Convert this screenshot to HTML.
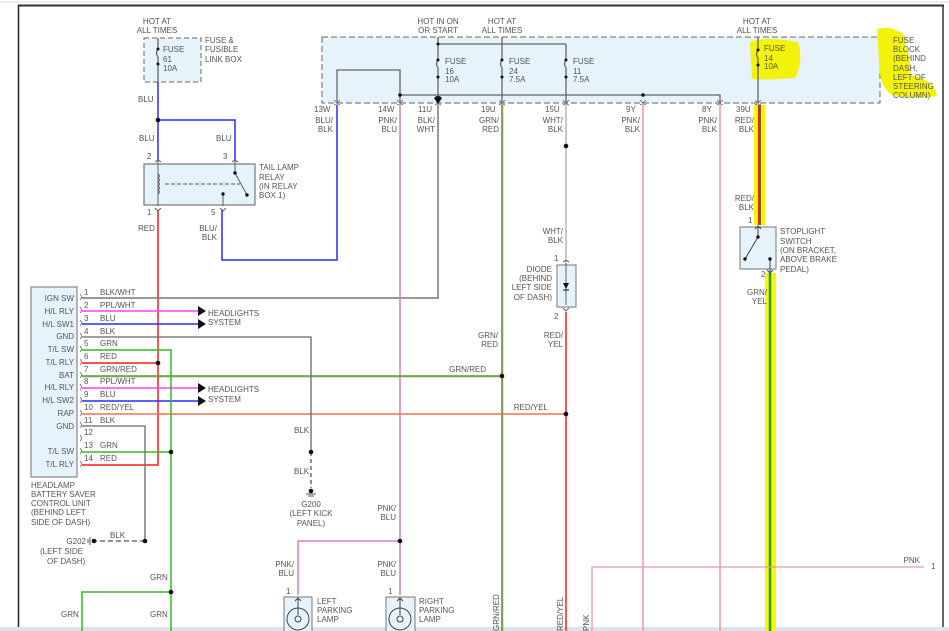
<!DOCTYPE html>
<html><head><meta charset="utf-8"><style>
html,body{margin:0;padding:0;background:#fff;width:949px;height:631px;overflow:hidden}
svg text{font-family:"Liberation Sans",sans-serif;font-size:8px;fill:#555}
</style></head><body>
<svg width="949" height="631" viewBox="0 0 949 631" xmlns="http://www.w3.org/2000/svg">
<rect width="949" height="631" fill="#fff"/>
<line x1="0" y1="2" x2="949" y2="2" stroke="#ddd" stroke-width="1"/>
<line x1="18" y1="5.5" x2="944" y2="5.5" stroke="#333" stroke-width="2"/>
<line x1="18.5" y1="5" x2="18.5" y2="631" stroke="#222" stroke-width="1.5"/>
<line x1="943" y1="5" x2="943" y2="631" stroke="#333" stroke-width="1.5"/>
<rect x="0" y="627" width="949" height="4" fill="#dde3e8"/>

<!-- fuse box 1 -->
<rect x="144" y="38" width="57" height="44" fill="#e6f3fb" stroke="#666" stroke-dasharray="5,3"/>
<!-- fuse block 2 -->
<rect x="322" y="37" width="558" height="66" fill="#e6f3fb" stroke="#666" stroke-dasharray="6,3"/>

<!-- highlights -->
<path d="M750 42 Q765 36 798 42 Q804 62 795 78 Q770 80 752 79 Z" fill="#f2f20a"/>
<path d="M877 29 Q890 26 895 30 Q910 35 905 45 Q912 60 910 75 Q935 80 937 96 Q910 99 892 95 Q878 85 879 60 Z" fill="#f2f20a"/>

<g fill="none" stroke-linecap="butt">
<path d="M158 38 V49 q-3 4 0 8 V82" stroke="#666" stroke-width="1.3"/>
<path d="M438 37 V60 q-3 4 0 8 V100" stroke="#666" stroke-width="1.3"/>
<path d="M438 44 H566" stroke="#666" stroke-width="1.3"/>
<path d="M502 37 V60 q-3 4 0 8 V102" stroke="#666" stroke-width="1.3"/>
<path d="M566 44 V60 q-3 4 0 8 V102" stroke="#666" stroke-width="1.3"/>
<path d="M758 37 V50 q-3 4 0 8 V102" stroke="#666" stroke-width="1.3"/>
<path d="M337 102 V70 H400 V102 M400 95 H720 V102" stroke="#666" stroke-width="1.3"/>

<path d="M158 82 V160 M158 120 H235 V160" stroke="#2a2aff" stroke-width="1.5"/>
<path d="M222 210 V260 H337 V105" stroke="#2a2aff" stroke-width="1.5"/>
<path d="M158 210 V465 H82 M158 363 H82" stroke="#ff1a1a" stroke-width="1.5"/>
<path d="M438 105 V298 H82" stroke="#777" stroke-width="1.5"/>
<path d="M400 105 V595 M400 541 H298 V595" stroke="#f07aa8" stroke-width="1.5"/>
<path d="M400 105 V595 M400 541 H298 V595" stroke="#9a8aff" stroke-width="0.5"/>
<path d="M502 105 V631 M82 376 H502" stroke="#3aa83a" stroke-width="1.6"/>
<path d="M503 105 V631 M82 377 H502" stroke="#f06040" stroke-width="0.5"/>
<path d="M566 105 V263" stroke="#aaa" stroke-width="1.3"/>
<path d="M566 312 V631" stroke="#ff1a1a" stroke-width="1.5"/>
<path d="M82 414 H566" stroke="#f5704e" stroke-width="1.6"/>
<path d="M643 105 V631 M720 105 V631" stroke="#f495a8" stroke-width="1.5"/>
<rect x="754" y="105" width="11" height="120" fill="#f8f800" stroke="none"/>
<path d="M759 105 V225" stroke="#ff1a1a" stroke-width="2"/>
<path d="M760.5 105 V225" stroke="#444" stroke-width="0.8"/>
<rect x="765" y="273" width="11" height="358" fill="#f8f800" stroke="none"/>
<path d="M770 273 V631" stroke="#2a9a2a" stroke-width="2.5"/>
<path d="M924 567 H592 V631" stroke="#f495a8" stroke-width="1.3"/>
<path d="M82 311 H200 M82 388 H200" stroke="#ff40ff" stroke-width="1.5"/>
<path d="M82 324 H200 M82 401 H200" stroke="#2a2aff" stroke-width="1.5"/>
<path d="M82 337 H311 V452" stroke="#666" stroke-width="1.3"/>
<path d="M311 452 V488" stroke="#555" stroke-width="1.3" stroke-dasharray="4,3"/>
<path d="M82 350 H171 V631 M82 452 H171 M171 592 H82 V631" stroke="#33bb22" stroke-width="1.5"/>
<path d="M82 426 H145 V541" stroke="#666" stroke-width="1.3"/>
<path d="M145 541 H94" stroke="#555" stroke-width="1.3" stroke-dasharray="5,3"/>
</g>

<g fill="#111">
<polygon points="198,306 206,311 198,316"/><polygon points="198,319 206,324 198,329"/>
<polygon points="198,383 206,388 198,393"/><polygon points="198,396 206,401 198,406"/>
<circle cx="158" cy="120" r="2.3"/><circle cx="158" cy="363" r="2.3"/><circle cx="171" cy="452" r="2.3"/>
<circle cx="171" cy="592" r="2.3"/><circle cx="145" cy="541" r="2.3"/><circle cx="311" cy="452" r="2.3"/>
<circle cx="311" cy="491" r="2.3"/><circle cx="400" cy="541" r="2.3"/><circle cx="502" cy="376" r="2.3"/>
<circle cx="566" cy="414" r="2.3"/><circle cx="566" cy="146" r="2.3"/><circle cx="400" cy="95" r="1.8"/>
<circle cx="643" cy="95" r="1.8"/><circle cx="438" cy="44" r="1.5"/><circle cx="94" cy="541" r="2.3"/>
<circle cx="158" cy="49" r="1.5"/><circle cx="158" cy="64" r="1.5"/>
<circle cx="438" cy="60" r="1.5"/><circle cx="438" cy="77" r="1.5"/>
<circle cx="502" cy="60" r="1.5"/><circle cx="502" cy="77" r="1.5"/>
<circle cx="566" cy="60" r="1.5"/><circle cx="566" cy="77" r="1.5"/>
<circle cx="758" cy="50" r="1.5"/><circle cx="758" cy="65" r="1.5"/>
<path d="M434 98 Q438 94 438 98 Q438 94 442 98 L438 104 Z"/>
</g>
<g stroke="#555" stroke-width="1"><line x1="306" y1="494" x2="316" y2="494"/><line x1="308" y1="496" x2="314" y2="496"/><line x1="90" y1="537" x2="90" y2="545"/><line x1="88" y1="539" x2="88" y2="543"/></g>

<g fill="none" stroke="#666" stroke-width="0.8">
<path d="M334 100 l3 3 l3 -3 M397 100 l3 3 l3 -3 M499 100 l3 3 l3 -3 M563 100 l3 3 l3 -3 M640 100 l3 3 l3 -3 M717 100 l3 3 l3 -3 M755 100 l3 3 l3 -3"/>
<path d="M334 105 q3 -2 6 0 M397 105 q3 -2 6 0 M435 105 q3 -2 6 0 M499 105 q3 -2 6 0 M563 105 q3 -2 6 0 M640 105 q3 -2 6 0 M717 105 q3 -2 6 0 M755 105 q3 -2 6 0"/>
<path d="M80 294 q3 3 0 6 M80 307 q3 3 0 6 M80 320 q3 3 0 6 M80 333 q3 3 0 6 M80 346 q3 3 0 6 M80 359 q3 3 0 6 M80 372 q3 3 0 6 M80 384 q3 3 0 6 M80 397 q3 3 0 6 M80 410 q3 3 0 6 M80 422 q3 3 0 6 M80 435 q3 3 0 6 M80 448 q3 3 0 6 M80 461 q3 3 0 6"/>
</g>

<rect x="144" y="164" width="111" height="41" fill="#e6f3fb" stroke="#777" stroke-width="1.2"/>
<g fill="none" stroke="#555" stroke-width="0.9">
<path d="M158 160 V206 M155 162 q3 -3 6 0 M155 208 l3 3 l3 -3"/>
<path d="M158 174 q3 2 0 4 q3 2 0 4 q3 2 0 4 q3 2 0 4 q3 2 0 4"/>
<path d="M165 184 H240" stroke-dasharray="4,2"/>
<path d="M235 160 V173 M232 162 q3 -3 6 0 M235 173 L247 195"/>
<path d="M223 193 V206 M220 208 l3 3 l3 -3"/>
</g>
<circle cx="235" cy="173" r="1.7" fill="#111"/><circle cx="247" cy="195" r="1.7" fill="#111"/><circle cx="223" cy="194" r="1.7" fill="#111"/>

<rect x="557" y="265" width="19" height="42" fill="#e6f3fb" stroke="#777"/>
<g fill="none" stroke="#555" stroke-width="0.9"><path d="M566 263 V305 M563 262 q3 -3 6 0 M563 308 l3 3 l3 -3"/></g>
<polygon points="563,283 569,283 566,289" fill="#111"/><line x1="563" y1="290" x2="569" y2="290" stroke="#111"/>

<rect x="740" y="227" width="36" height="42" fill="#e6f3fb" stroke="#777"/>
<g fill="none" stroke="#444" stroke-width="1"><path d="M758 226 V237 L745 259 M770 259 V272 M755 229 l3 -3 l3 3 M767 270 l3 3 l3 -3"/></g>
<circle cx="758" cy="237" r="1.7" fill="#111"/><circle cx="745" cy="259" r="1.7" fill="#111"/><circle cx="770" cy="259" r="1.7" fill="#111"/>

<rect x="31" y="287" width="46" height="190" fill="#e6f3fb" stroke="#888" stroke-width="1.2"/>

<rect x="284" y="597" width="28" height="40" fill="#e6f3fb" stroke="#777"/>
<rect x="386" y="597" width="29" height="40" fill="#e6f3fb" stroke="#777"/>
<g fill="none" stroke="#444" stroke-width="1"><circle cx="298" cy="619" r="11"/><circle cx="400" cy="619" r="11"/><path d="M298 599 V615 M295 601 l3 -3 l3 3 M400 599 V615 M397 601 l3 -3 l3 3"/><circle cx="298" cy="619" r="3"/><circle cx="400" cy="619" r="3"/></g>

<g>
<text x="157" y="24" text-anchor="middle">HOT AT</text><text x="157" y="33" text-anchor="middle">ALL TIMES</text>
<text x="163" y="52">FUSE</text><text x="163" y="62">61</text><text x="163" y="71">10A</text>
<text x="205" y="43">FUSE &amp;</text><text x="205" y="52">FUSIBLE</text><text x="205" y="62">LINK BOX</text>
<text x="438" y="24" text-anchor="middle">HOT IN ON</text><text x="438" y="33" text-anchor="middle">OR START</text>
<text x="502" y="24" text-anchor="middle">HOT AT</text><text x="502" y="33" text-anchor="middle">ALL TIMES</text>
<text x="757" y="24" text-anchor="middle">HOT AT</text><text x="757" y="33" text-anchor="middle">ALL TIMES</text>
<text x="445" y="64">FUSE</text><text x="445" y="74">16</text><text x="445" y="82">10A</text>
<text x="509" y="64">FUSE</text><text x="509" y="74">24</text><text x="509" y="82">7.5A</text>
<text x="573" y="64">FUSE</text><text x="573" y="74">11</text><text x="573" y="82">7.5A</text>
<text x="764" y="51">FUSE</text><text x="764" y="61">14</text><text x="764" y="69">10A</text>
<text x="893" y="43">FUSE</text><text x="893" y="52">BLOCK</text><text x="893" y="61">(BEHIND</text><text x="893" y="71">DASH,</text><text x="893" y="80">LEFT OF</text><text x="893" y="89">STEERING</text><text x="893" y="98">COLUMN)</text>
<text x="314" y="112">13W</text><text x="378" y="112">14W</text><text x="418" y="112">11U</text><text x="481" y="112">19U</text><text x="545" y="112">15U</text><text x="626" y="112">9Y</text><text x="702" y="112">8Y</text><text x="736" y="112">39U</text>
<text x="333" y="123" text-anchor="end">BLU/</text><text x="333" y="132" text-anchor="end">BLK</text>
<text x="397" y="123" text-anchor="end">PNK/</text><text x="397" y="132" text-anchor="end">BLU</text>
<text x="435" y="123" text-anchor="end">BLK/</text><text x="435" y="132" text-anchor="end">WHT</text>
<text x="499" y="123" text-anchor="end">GRN/</text><text x="499" y="132" text-anchor="end">RED</text>
<text x="563" y="123" text-anchor="end">WHT/</text><text x="563" y="132" text-anchor="end">BLK</text>
<text x="640" y="123" text-anchor="end">PNK/</text><text x="640" y="132" text-anchor="end">BLK</text>
<text x="717" y="123" text-anchor="end">PNK/</text><text x="717" y="132" text-anchor="end">BLK</text>
<text x="754" y="123" text-anchor="end">RED/</text><text x="754" y="132" text-anchor="end">BLK</text>
<text x="138" y="102">BLU</text><text x="139" y="141">BLU</text><text x="216" y="141">BLU</text>
<text x="147" y="159">2</text><text x="223" y="159">3</text><text x="147" y="215">1</text><text x="211" y="215">5</text>
<text x="259" y="170">TAIL LAMP</text><text x="259" y="180">RELAY</text><text x="259" y="189">(IN RELAY</text><text x="259" y="198">BOX 1)</text>
<text x="138" y="231">RED</text><text x="217" y="231" text-anchor="end">BLU/</text><text x="217" y="240" text-anchor="end">BLK</text>
<text x="754" y="201" text-anchor="end">RED/</text><text x="754" y="210" text-anchor="end">BLK</text>
<text x="748" y="223">1</text><text x="761" y="277">2</text>
<text x="780" y="234">STOPLIGHT</text><text x="780" y="244">SWITCH</text><text x="780" y="253">(ON BRACKET,</text><text x="780" y="262">ABOVE BRAKE</text><text x="780" y="272">PEDAL)</text>
<text x="767" y="295" text-anchor="end">GRN/</text><text x="767" y="304" text-anchor="end">YEL</text>
<text x="563" y="234" text-anchor="end">WHT/</text><text x="563" y="243" text-anchor="end">BLK</text>
<text x="554" y="261">1</text><text x="554" y="319">2</text>
<text x="552" y="272" text-anchor="end">DIODE</text><text x="552" y="281" text-anchor="end">(BEHIND</text><text x="552" y="290" text-anchor="end">LEFT SIDE</text><text x="552" y="300" text-anchor="end">OF DASH)</text>
<text x="498" y="338" text-anchor="end">GRN/</text><text x="498" y="347" text-anchor="end">RED</text>
<text x="563" y="338" text-anchor="end">RED/</text><text x="563" y="347" text-anchor="end">YEL</text>
<text x="486" y="372" text-anchor="end">GRN/RED</text><text x="548" y="410" text-anchor="end">RED/YEL</text>
<g text-anchor="end">
<text x="74" y="301">IGN SW</text><text x="74" y="314">H/L RLY</text><text x="74" y="327">H/L SW1</text><text x="74" y="339">GND</text><text x="74" y="352">T/L SW</text><text x="74" y="365">T/L RLY</text><text x="74" y="378">BAT</text><text x="74" y="390">H/L RLY</text><text x="74" y="403">H/L SW2</text><text x="74" y="416">RAP</text><text x="74" y="429">GND</text><text x="74" y="454">T/L SW</text><text x="74" y="467">T/L RLY</text>
</g>
<text x="84" y="295">1</text><text x="84" y="308">2</text><text x="84" y="321">3</text><text x="84" y="334">4</text><text x="84" y="346">5</text><text x="84" y="359">6</text><text x="84" y="372">7</text><text x="84" y="384">8</text><text x="84" y="397">9</text><text x="84" y="410">10</text><text x="84" y="423">11</text><text x="84" y="435">12</text><text x="84" y="448">13</text><text x="84" y="461">14</text>
<text x="100" y="295">BLK/WHT</text><text x="100" y="308">PPL/WHT</text><text x="100" y="321">BLU</text><text x="100" y="334">BLK</text><text x="100" y="346">GRN</text><text x="100" y="359">RED</text><text x="100" y="372">GRN/RED</text><text x="100" y="384">PPL/WHT</text><text x="100" y="397">BLU</text><text x="100" y="410">RED/YEL</text><text x="100" y="423">BLK</text><text x="100" y="448">GRN</text><text x="100" y="461">RED</text>
<text x="208" y="316">HEADLIGHTS</text><text x="208" y="325">SYSTEM</text>
<text x="208" y="392">HEADLIGHTS</text><text x="208" y="402">SYSTEM</text>
<text x="31" y="488">HEADLAMP</text><text x="31" y="497">BATTERY SAVER</text><text x="31" y="506">CONTROL UNIT</text><text x="31" y="515">(BEHIND LEFT</text><text x="31" y="525">SIDE OF DASH)</text>
<text x="110" y="538">BLK</text><text x="86" y="544" text-anchor="end">G202</text><text x="40" y="554">(LEFT SIDE</text><text x="47" y="564">OF DASH)</text>
<text x="294" y="433">BLK</text><text x="294" y="474">BLK</text>
<text x="311" y="507" text-anchor="middle">G200</text><text x="311" y="516" text-anchor="middle">(LEFT KICK</text><text x="311" y="526" text-anchor="middle">PANEL)</text>
<text x="396" y="511" text-anchor="end">PNK/</text><text x="396" y="520" text-anchor="end">BLU</text>
<text x="294" y="567" text-anchor="end">PNK/</text><text x="294" y="576" text-anchor="end">BLU</text>
<text x="396" y="567" text-anchor="end">PNK/</text><text x="396" y="576" text-anchor="end">BLU</text>
<text x="150" y="580">GRN</text><text x="150" y="617">GRN</text><text x="61" y="617">GRN</text>
<text x="286" y="594">1</text><text x="388" y="594">1</text>
<text x="317" y="604">LEFT</text><text x="317" y="613">PARKING</text><text x="317" y="622">LAMP</text>
<text x="419" y="604">RIGHT</text><text x="419" y="613">PARKING</text><text x="419" y="622">LAMP</text>
<text x="920" y="563" text-anchor="end">PNK</text><text x="931" y="569">1</text>
<text transform="translate(499,631) rotate(-90)">GRN/RED</text>
<text transform="translate(563,631) rotate(-90)">RED/YEL</text>
<text transform="translate(589,631) rotate(-90)">PNK</text>
</g>
</svg>
</body></html>
